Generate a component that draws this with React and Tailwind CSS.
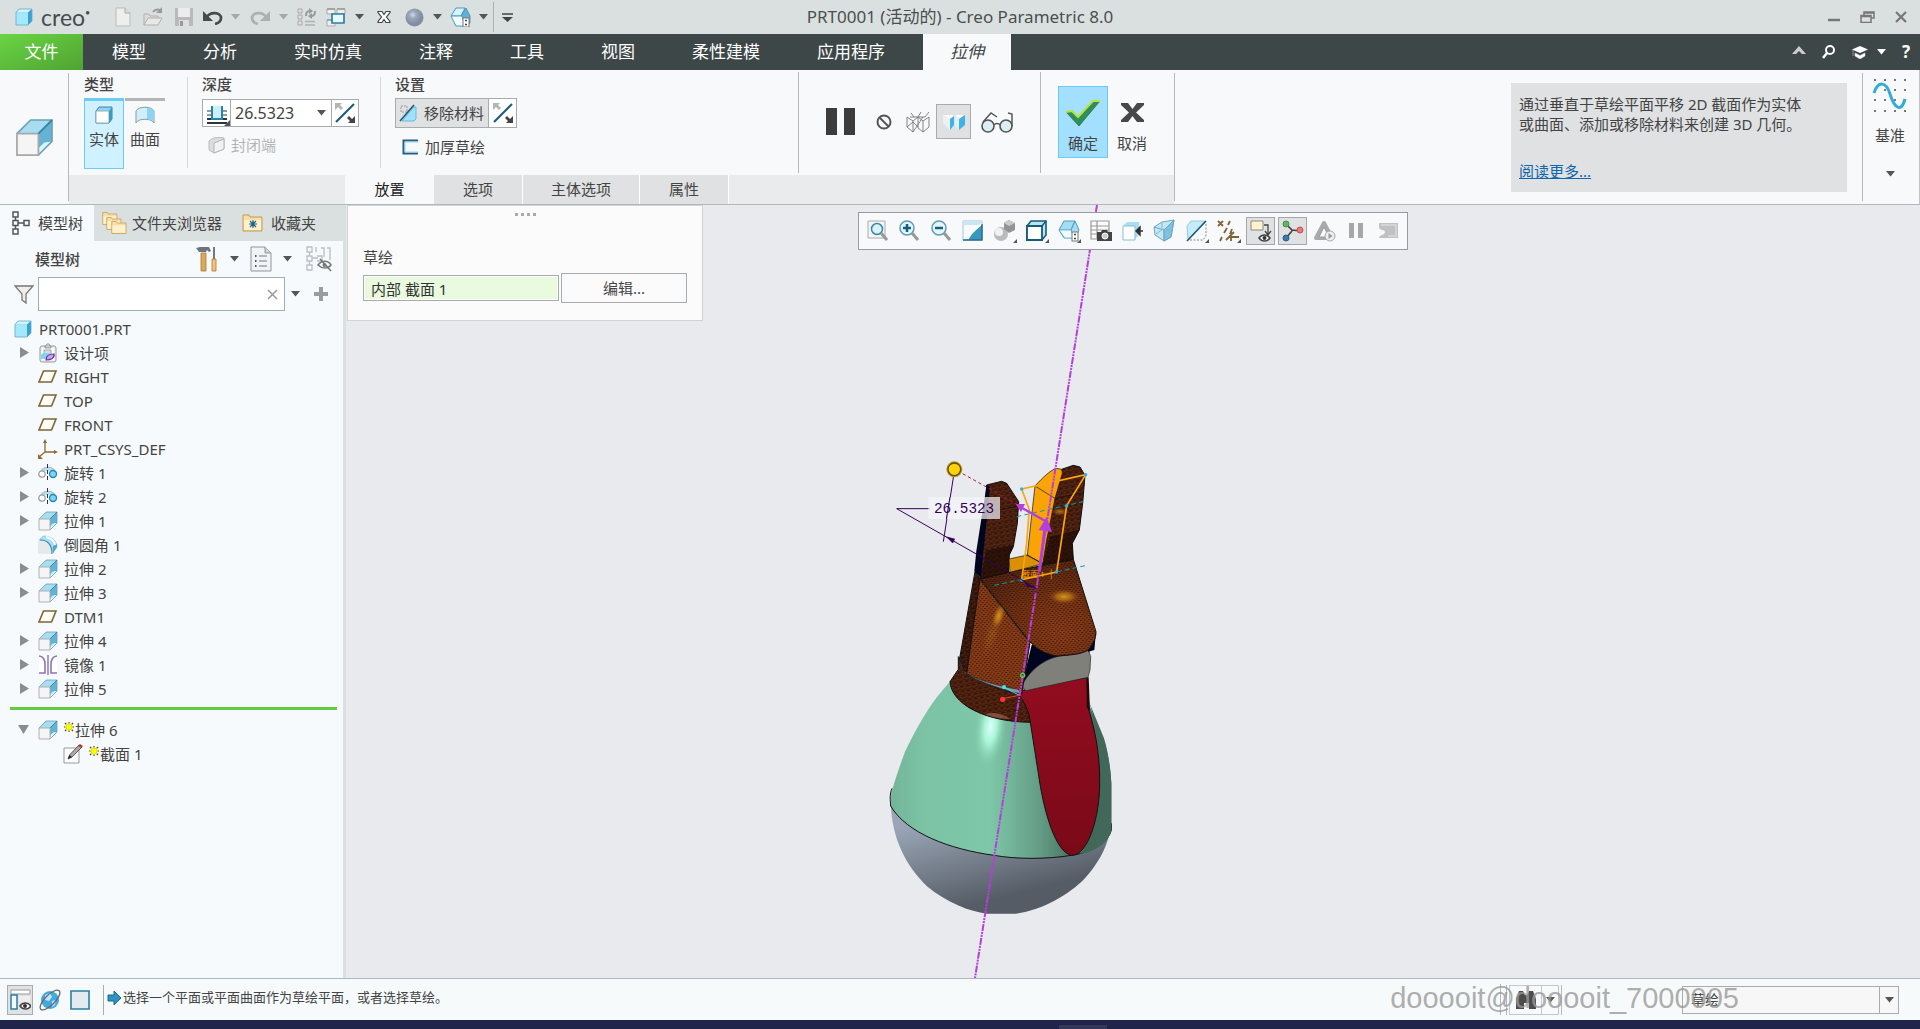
import React from 'react';
import clsx from 'clsx';

const Svg = ({ w = 20, h = 20, box, className, children }) => (
  <svg width={w} height={h} viewBox={box || `0 0 ${w} ${h}`} fill="none" className={clsx('shrink-0', className)} aria-hidden="true">
    {children}
  </svg>
);

const Caret = ({ color = '#555', className }) => (
  <Svg w={9} h={6} className={className}>
    <path d="M0 0h9L4.5 5.5z" fill={color} />
  </Svg>
);

const PartIcon = () => (
  <Svg w={18} h={18}>
    <path d="M1 4.500l3-3.500h13v12l-4 4H1z" fill="#56c5ee" />
    <path d="M1 4.500L4 1h13l-4 3.500z" fill="#d6f4ff" />
    <path d="M1 4.500h12V17H1z" fill="#a3e8ff" />
    <path d="M13 4.500L17 1v12l-4 4z" fill="#3ba2d0" />
    <path d="M1 4.500L4 1h13v12l-4 4H1z" stroke="#5fa9c8" strokeWidth=".8" />
  </Svg>
);

const ExtrudeIcon = ({ size = 20 }) => (
  <Svg w={size} h={size} box="0 0 20 20">
    <path d="M1 8L8 1h11l-7 7z" fill="#a8dcf0" />
    <path d="M12 8l7-7v11l-7 7z" fill="#66b2d3" />
    <path d="M12 19l7-7-4 .5-3 3z" fill="#d5f5ff" />
    <path d="M1 8L8 1h11v11l-7 7" stroke="#6fa0b5" strokeWidth=".8" />
    <path d="M1 8h11v11H1z" fill="#f5f5f5" stroke="#a8a8a8" strokeWidth=".9" />
    <path d="M12 8l7-7" stroke="#3387a9" />
  </Svg>
);

const PlaneIcon = () => (
  <Svg w={20} h={20}>
    <path d="M5.500 4H18l-4.500 11H1z" stroke="#7e6538" strokeWidth="1.600" fill="#fffdf5" />
  </Svg>
);

const CsysIcon = () => (
  <Svg w={20} h={20}>
    <path d="M7 2v11h11M7 13l-6 5" stroke="#8a6a35" strokeWidth="1.300" />
    <path d="M5 4l2-4 2 4zM16 11l4 2-4 2zM0 15v5h5z" fill="#8a6a35" />
  </Svg>
);

const RevolveIcon = () => (
  <Svg w={20} h={20}>
    <path d="M3 8c2-5 12-5 14 0" fill="#b9e0ee" stroke="#8cb9c9" />
    <circle cx="4" cy="11" r="3.200" fill="#fff" stroke="#999" strokeWidth="1.200" />
    <circle cx="15" cy="11" r="3.500" fill="#7fd5fa" stroke="#2487b5" strokeWidth="1.400" />
    <path d="M9.500 1v18" stroke="#333" strokeDasharray="4 2" />
  </Svg>
);

const RoundIcon = () => (
  <Svg w={20} h={20}>
    <path d="M1 5l4-4c8 0 14 4 14 11l-4 6C15 10 10 5 1 5z" fill="#a5e0f7" stroke="#9abccb" strokeWidth=".7" />
    <path d="M15 11l4-2v3l-4 6z" fill="#4fa9cd" />
    <path d="M8 2c5 1 8 4 9 8" stroke="#fff" strokeWidth="2" />
    <path d="M0 5c9 0 14 5 14 14H0z" fill="#e7e8e8" />
    <path d="M2 5c8 0 12 5 12 14" stroke="#3b93b9" strokeWidth="1.200" />
  </Svg>
);

const MirrorIcon = () => (
  <Svg w={20} h={20}>
    <path d="M1 1c4 0 6 4 6 8v9H1M19 1c-4 0-6 4-6 8v9h6" stroke="#9472b8" strokeWidth="1.600" fill="#fff" />
    <path d="M10 0v20" stroke="#777" strokeWidth="1.300" />
  </Svg>
);

const DesignIcon = () => (
  <Svg w={20} h={20}>
    <rect x="2" y="3" width="16" height="16" rx="2" fill="#eee" stroke="#999" />
    <rect x="4" y="5" width="12" height="12" fill="#fff" />
    <path d="M7 5V3h1c0-3 4-3 4 0h1v2z" fill="#ccc" stroke="#888" strokeWidth=".8" />
    <rect x="6" y="7" width="7" height="6" fill="#ddd" stroke="#888" strokeWidth=".7" />
    <path d="M3 12l2-2h7l-2 6H3z" fill="#7fd3f5" />
    <path d="M8 17c0-4 3-6 8-6 1 4-3 6-8 6z" fill="#c9a6e8" stroke="#6c2fa8" strokeWidth="1.200" />
  </Svg>
);

const SketchIcon = () => (
  <Svg w={20} h={20}>
    <path d="M1 4h15v15H1z" fill="#fcfcfc" stroke="#999" />
    <path d="M5 15l1.500-4L16 1l3 2L9 13z" fill="#aaa" stroke="#444" strokeWidth=".8" />
    <path d="M5 15l1.500-4L9 13z" fill="#222" />
    <path d="M15 2l2-2 3 2-2 2z" fill="#c0392b" />
  </Svg>
);

const Spark = () => (
  <Svg w={10} h={10}>
    <path d="M5 0v10M0 5h10M1 1l8 8M9 1L1 9" stroke="#444" strokeWidth="1.200" />
    <path d="M5 1v8M1 5h8M2 2l6 6M8 2L2 8" stroke="#f6ee00" strokeWidth="1.500" />
    <circle cx="5" cy="5" r="2.500" fill="#ff0" />
  </Svg>
);

const FlipIcon = () => (
  <Svg w={22} h={22}>
    <path d="M2 20L20 2" stroke="#1f5c78" strokeWidth="2.200" />
    <path d="M1 1h7L6 3l3 3-2 2-3-3-3 3z" fill="#b5b5b5" />
    <path d="M21 21h-7l2-2-3-3 2-2 3 3 3-3z" fill="#444" />
  </Svg>
);

const FolderShape = ({ x = 0, y = 0, s = 1 }) => (
  <g transform={`translate(${x} ${y}) scale(${s})`}>
    <path d="M1 4V2h6l1 2h12v14H1z" fill="#f8dfa5" stroke="#c19a55" />
    <path d="M2 7h17v10H2z" fill="#fff1cd" />
  </g>
);

const TREE = [
  { name: '设计项', icon: DesignIcon, open: true },
  { name: 'RIGHT', icon: PlaneIcon },
  { name: 'TOP', icon: PlaneIcon },
  { name: 'FRONT', icon: PlaneIcon },
  { name: 'PRT_CSYS_DEF', icon: CsysIcon },
  { name: '旋转 1', icon: RevolveIcon, open: true },
  { name: '旋转 2', icon: RevolveIcon, open: true },
  { name: '拉伸 1', icon: ExtrudeIcon, open: true },
  { name: '倒圆角 1', icon: RoundIcon },
  { name: '拉伸 2', icon: ExtrudeIcon, open: true },
  { name: '拉伸 3', icon: ExtrudeIcon, open: true },
  { name: 'DTM1', icon: PlaneIcon },
  { name: '拉伸 4', icon: ExtrudeIcon, open: true },
  { name: '镜像 1', icon: MirrorIcon, open: true },
  { name: '拉伸 5', icon: ExtrudeIcon, open: true },
];

const MENU = ['模型', '分析', '实时仿真', '注释', '工具', '视图', '柔性建模', '应用程序'];

const ViewBox = () => (
  <Svg w={21} h={20}>
    <path d="M1 9l5-8h10l4 7v9l-5 2H5z" fill="#9fd9f0" />
    <path d="M1 9l5-8h9l-4 8z" fill="#d8f3fd" stroke="#4a9dc0" />
    <path d="M11 9l5-8 4 8v7l-5 3z" fill="#5fb2d6" stroke="#3c8fb4" strokeWidth=".8" />
    <path d="M1 9h11l3 10H6z" fill="#f1fbff" stroke="#4a9dc0" />
    <rect x="13" y="11" width="6" height="9" fill="#fff" stroke="#777" />
    <path d="M15 13.500h2M15 17.500h2" stroke="#444" strokeWidth="1.500" />
  </Svg>
);

const TitleBar = () => (
  <header className="grid h-[34px] shrink-0 grid-cols-[1fr_auto_1fr] items-center bg-[#dae0df]">
    <div className="flex items-center">
      <div className="flex w-[114px] items-center gap-2 pl-[15px]">
        <PartIcon />
        <span className="flex font-['Lato','Noto_Sans',sans-serif] text-[23px] leading-6 text-[#454c4e]">
          creo<span className="text-[9px] leading-4">•</span>
        </span>
      </div>
      <button type="button" aria-label="新建" className="w-[29px]">
        <Svg w={18} h={20}>
          <path d="M2 1h9l5 5v13H2z" fill="#eeeeec" stroke="#bbb" />
          <path d="M11 1v5h5" stroke="#aaa" fill="#ddd" />
        </Svg>
      </button>
      <button type="button" aria-label="打开" className="w-[31px]">
        <Svg w={21} h={20}>
          <path d="M1 18V7h5l1 2h8v3" fill="#ddd" stroke="#b0b0b0" />
          <path d="M1 18l4-7h14l-4 7z" fill="#e8e8e6" stroke="#b0b0b0" />
          <path d="M10 5c2-3 4-3 7-2" stroke="#999" strokeWidth="2" />
          <path d="M19 0v6h-6z" fill="#999" />
        </Svg>
      </button>
      <button type="button" aria-label="保存" className="w-[28px]">
        <Svg w={20} h={20}>
          <path d="M1 1h18v18H1z" fill="#b9b9b9" />
          <path d="M4 1h12v9H4z" fill="#ececec" />
          <path d="M5 13h10v6H5z" fill="#dedede" />
          <path d="M6 14h3v5H6z" fill="#999" />
        </Svg>
      </button>
      <button type="button" aria-label="撤销" className="flex w-[48px] items-center gap-2">
        <Svg w={21} h={16}>
          <path d="M4 9C8 2 19 3 19 9c0 3-2 5-6 6" stroke="#444b4d" strokeWidth="2.700" />
          <path d="M1 2v10h10z" fill="#444b4d" />
        </Svg>
        <Caret color="#a5a8a8" />
      </button>
      <button type="button" aria-label="重做" className="flex w-[47px] items-center gap-2">
        <Svg w={21} h={16}>
          <path d="M17 9C13 2 2 3 2 9c0 3 2 5 6 6" stroke="#acb0b0" strokeWidth="2.700" />
          <path d="M20 2v10H10z" fill="#acb0b0" />
        </Svg>
        <Caret color="#a5a8a8" />
      </button>
      <button type="button" aria-label="重新生成" className="w-[29px]">
        <Svg w={20} h={20}>
          <path d="M1 2h4v4H1zM1 8h4v4H1zM1 14h4v4H1z" stroke="#aaa" />
          <path d="M8 14.500h10M8 18h10" stroke="#b0b0b0" strokeWidth="1.500" />
          <path d="M9 9c0-4 1-5 4-5M18 4c0 4-1 5-4 5" stroke="#999" strokeWidth="2" />
          <path d="M12 1l4 3-4 3zM15 6l-4 3 4 3z" fill="#999" />
        </Svg>
      </button>
      <button type="button" aria-label="窗口" className="flex w-[51px] items-center gap-[9px]">
        <Svg w={20} h={20}>
          <path d="M1 2h8v5H1zM11 2h8v5h-8zM1 13h8v6H1z" fill="#eee" stroke="#aaa" />
          <path d="M1 2h8M11 2h8M1 13h6" stroke="#999" strokeWidth="1.500" />
          <path d="M6 7h12v9H6z" fill="#e9f8ff" stroke="#2b7fa3" strokeWidth="1.700" />
        </Svg>
        <Caret />
      </button>
      <button type="button" aria-label="关闭" className="w-[28px]">
        <Svg w={14} h={14}>
          <path d="M1 1.500h4l2 3 2-3h4v1L9.500 7l3.500 4.500v1H9l-2-3-2 3H1v-1L4.500 7 1 2.500z" fill="#fff" stroke="#444" strokeWidth="1.200" />
        </Svg>
      </button>
      <button type="button" aria-label="外观" className="flex w-[45px] items-center gap-[9px]">
        <Svg w={19} h={19}>
          <defs>
            <radialGradient id="ball" cx=".4" cy=".35">
              <stop offset="0" stopColor="#d3dbe6" />
              <stop offset=".4" stopColor="#9ca8ba" />
              <stop offset="1" stopColor="#818da0" />
            </radialGradient>
          </defs>
          <circle cx="9.500" cy="9.500" r="9" fill="url(#ball)" />
        </Svg>
        <Caret />
      </button>
      <button type="button" aria-label="视图方向" className="flex w-[43px] items-center gap-2">
        <ViewBox />
        <Caret />
      </button>
      <span className="h-[30px] w-px bg-[#a8b0b0]" />
      <button type="button" aria-label="自定义" className="ml-2">
        <Svg w={11} h={9}>
          <path d="M0 1h11" stroke="#444" strokeWidth="1.500" />
          <path d="M0 4h11L5.500 9z" fill="#444" />
        </Svg>
      </button>
    </div>
    <h1 className="text-[17px] leading-6 text-[#4a4f50]">PRT0001 (活动的) - Creo Parametric 8.0</h1>
    <div className="flex items-center justify-end gap-5 pr-[13px]">
      <button type="button" aria-label="最小化">
        <Svg w={12} h={12}><path d="M0 9h12" stroke="#777" strokeWidth="2.500" /></Svg>
      </button>
      <button type="button" aria-label="还原">
        <Svg w={15} h={12}><path d="M4 4V1h10v6h-3M4 2h10M1 4.500h10v7H1zM1 5.500h10" stroke="#777" strokeWidth="1.500" /></Svg>
      </button>
      <button type="button" aria-label="关闭窗口">
        <Svg w={12} h={12}><path d="M1 1l10 10M11 1L1 11" stroke="#777" strokeWidth="2.200" /></Svg>
      </button>
    </div>
  </header>
);

const MenuBar = () => (
  <nav className="flex h-9 shrink-0 items-stretch gap-px bg-[#3d4747] text-[17px] text-white">
    <button type="button" className="w-[83px] bg-linear-to-br from-[#6bd544] to-[#4fa332]">文件</button>
    {MENU.map((item) => (
      <button type="button" key={item} className="px-7">{item}</button>
    ))}
    <button type="button" className="ml-[9px] w-[88px] bg-[#f8f9fb] text-[#3f4647] italic">拉伸</button>
    <div className="mr-[10px] ml-auto flex items-center gap-4">
      <button type="button" aria-label="折叠"><Svg w={14} h={14}><path d="M0 9l7-8 7 8h-4L7 6 4 9z" fill="#ccc" /></Svg></button>
      <button type="button" aria-label="搜索">
        <Svg w={14} h={14}><circle cx="8" cy="5" r="4" stroke="#fff" strokeWidth="2" /><path d="M5 8l-4 5" stroke="#fff" strokeWidth="2.500" /></Svg>
      </button>
      <button type="button" aria-label="学习" className="flex items-center gap-[9px]">
        <Svg w={16} h={14}>
          <path d="M8 1l8 3.500L8 8 0 4.500z" fill="#fff" />
          <path d="M3 8l5 2.500L13 8v3l-5 3-5-3zM1 5v6" fill="#fff" stroke="#ddd" strokeWidth=".5" />
        </Svg>
        <Caret color="#fff" />
      </button>
      <button type="button" aria-label="帮助" className="text-[17px] leading-5 font-bold">?</button>
    </div>
  </nav>
);

const groupTitle = 'text-[15px] leading-5 font-medium text-[#444]';

const Ribbon = () => (
  <section className="flex h-[135px] shrink-0 border-b border-[#b0b8ba] bg-[#f8f9fb] text-[15px] text-[#444]">
    <div className="flex w-[68px] items-center">
      <span className="pl-[15px]"><ExtrudeIcon size={39} /></span>
    </div>
    <div className="my-[3px] w-px bg-[#b5b9bb]" />
    <div className="flex w-[1105px] shrink-0 flex-col">
      <div className="flex h-[105px]">
        <div className="w-[118px] pt-1 pl-[15px]">
          <h2 className={groupTitle}>类型</h2>
          <div className="mt-1 flex gap-px">
            <button type="button" className="flex h-[71px] w-10 flex-col items-center gap-1 border border-t-3 border-[#6ccbf5] bg-[#d0f1ff] pt-1">
              <Svg w={20} h={20}>
                <path d="M2 6l3-4h13v12l-3 4H2z" fill="#8fd3f0" stroke="#3b83a1" />
                <path d="M2 6h13v12H2z" fill="#fff" stroke="#9ab" />
                <path d="M15 6l3-4v12l-3 4z" fill="#3a9cc6" />
              </Svg>
              <span className="leading-5">实体</span>
            </button>
            <button type="button" className="flex h-[71px] w-10 flex-col items-center gap-1 border-t-3 border-[#b5b5b5] pt-1">
              <Svg w={20} h={20}>
                <path d="M1 18V6c2-5 16-5 18 0v12c-2-5-16-5-18 0z" fill="#cfeffb" stroke="#8a9ba2" />
                <path d="M12 3c4 0 6 1 7 3v11c-1-2-4-3-7-3z" fill="#8dd4f0" />
              </Svg>
              <span className="leading-5">曲面</span>
            </button>
          </div>
        </div>
        <div className="my-[7px] w-px bg-[#d5d7da]" />
        <div className="w-[192px] pt-1 pl-[14px]">
          <h2 className={groupTitle}>深度</h2>
          <div className="mt-[5px] flex h-7 w-[157px] border border-[#a9acae] bg-white">
            <button type="button" aria-label="深度选项" className="flex w-7 items-center justify-center border-r border-[#a9acae]">
              <Svg w={26} h={26}>
                <path d="M3 11h5M3 15h5M18 11h5M18 15h5" stroke="#999" strokeWidth="2" />
                <path d="M8 6v13h10V6" stroke="#2584ad" strokeWidth="2" fill="#cdeffc" />
                <path d="M3 19h4M19 19h4M3 23h20" stroke="#333" strokeWidth="2" />
                <path d="M26 20v6h-6z" fill="#555" />
              </Svg>
            </button>
            <input aria-label="深度" defaultValue="26.5323" className="w-[86px] min-w-0 pl-1 text-[16px] text-[#444] outline-none" />
            <button type="button" aria-label="深度值列表" className="w-[14px]"><Caret /></button>
            <button type="button" aria-label="反向" className="flex flex-1 items-center justify-center border-l border-[#a9acae]"><FlipIcon /></button>
          </div>
          <button type="button" disabled className="mt-2 flex items-center gap-[6px] pl-[6px] leading-5 text-[#b3b6b8]">
            <Svg w={17} h={18}>
              <path d="M1 5c4-4 10-4 15-3v11L6 17l-5-3z" fill="#ddd" stroke="#bbb" />
              <path d="M6 7l10-4v10L6 17z" fill="#f2f2f2" stroke="#b5b5b5" />
            </Svg>
            封闭端
          </button>
        </div>
        <div className="my-[7px] w-px bg-[#d5d7da]" />
        <div className="w-[417px] pt-1 pl-[14px]">
          <h2 className={groupTitle}>设置</h2>
          <div className="mt-1 flex h-[30px] w-[122px] border border-[#a9acae]">
            <button type="button" className="flex w-[93px] items-center gap-[6px] border-r border-[#a9acae] bg-[#dfe1e3] pl-[3px]">
              <Svg w={19} h={20}>
                <path d="M2 3h6v6H2z" stroke="#999" strokeDasharray="2 1" />
                <path d="M3 18L15 4h2v12l-2 2z" fill="#9fe2fc" stroke="#5eb0d0" strokeWidth=".8" />
                <path d="M1 18L15 2" stroke="#1f5c78" strokeWidth="1.700" />
              </Svg>
              移除材料
            </button>
            <button type="button" aria-label="切换侧" className="flex flex-1 items-center justify-center bg-white"><FlipIcon /></button>
          </div>
          <button type="button" className="mt-[9px] flex items-center gap-[7px] pl-[7px] leading-5">
            <Svg w={16} h={16}><path d="M16 1.500H1.500v13H16" stroke="#27607b" strokeWidth="2" /><path d="M16 3H3v10h13" stroke="#9ad6ee" /></Svg>
            加厚草绘
          </button>
        </div>
        <div className="my-[2px] w-px bg-[#b5b9bb]" />
        <div className="flex w-[241px] items-center pb-[2px] pl-[27px]">
          <button type="button" aria-label="暂停" className="w-[50px]">
            <Svg w={29} h={27}><path d="M0 0h11v27H0zM18 0h11v27H18z" fill="#3c3c3c" /></Svg>
          </button>
          <button type="button" aria-label="无预览" className="w-[30px]">
            <Svg w={16} h={16}><circle cx="8" cy="8" r="6.500" stroke="#555" strokeWidth="2" /><path d="M3.500 3.500l9 9" stroke="#555" strokeWidth="2" /></Svg>
          </button>
          <button type="button" aria-label="分离" className="w-[30px]">
            <Svg w={24} h={22}>
              <path d="M1 6l6 4 5-4M7 10v11M1 6v10l6 5 10-15M1 16l6-5 5 5M12 6l5 4 6-4M17 10v11M12 6v11l5 4 6-5V6M5 2l3 4M15 1l-3 5M23 1l-4 5H4" stroke="#777" strokeWidth=".9" />
            </Svg>
          </button>
          <button type="button" aria-label="连接" className="flex h-[35px] w-[35px] items-center justify-center border border-[#a9acae] bg-[#dfe1e3]">
            <Svg w={24} h={18}>
              <path d="M1 2h9l2 1-4 3z" fill="#fff" /><path d="M1 2l7 4v11l-7-7z" fill="#eef1f3" />
              <path d="M8 6l4-3v9l-4 5z" fill="#3fb2ea" />
              <path d="M13 2h9l-5 4z" fill="#fff" /><path d="M13 2l4 4v11l-4-4z" fill="#dff0f8" />
              <path d="M17 6l6-4v10l-6 5z" fill="#3fb2ea" />
            </Svg>
          </button>
          <button type="button" aria-label="预览" className="ml-[9px]">
            <Svg w={36} h={22}>
              <circle cx="8" cy="15" r="6" fill="#dcedf5" stroke="#555" strokeWidth="1.600" />
              <circle cx="26" cy="15" r="6" fill="#dcedf5" stroke="#555" strokeWidth="1.600" />
              <path d="M14 14c1-2 5-2 6 0M3 11l8-9 6 4M32 15V3l-4-1" stroke="#555" strokeWidth="1.500" />
            </Svg>
          </button>
        </div>
        <div className="my-[2px] w-px bg-[#b5b9bb]" />
        <div className="flex gap-[9px] pt-4 pl-[17px]">
          <button type="button" className="flex h-[72px] w-[50px] flex-col items-center justify-between border border-[#6ccbf5] bg-[#a3dfff] pt-[13px] pb-1">
            <Svg w={36} h={27}>
              <path d="M1 12l6-1 6 6L28 1h7L14 26z" fill="#2f8f5b" stroke="#1f6b42" strokeWidth=".7" />
              <path d="M1 12l6-1 6 6L28 1h7" stroke="#b9e23a" strokeWidth="2" />
            </Svg>
            <span className="leading-5">确定</span>
          </button>
          <button type="button" className="flex h-[72px] flex-col items-center justify-between pt-4 pb-[5px]">
            <Svg w={25} h={21}>
              <path d="M1 1h7l4.500 6L17 1h7v2l-8 7.500 8 7.500v2h-7l-4.500-6L8 20H1v-2l8-7.500L1 3z" fill="#484848" />
            </Svg>
            <span className="leading-5">取消</span>
          </button>
        </div>
      </div>
      <div className="flex h-[29px] bg-[#e9ebec] pl-[276px]">
        <button type="button" className="w-[89px] bg-[#f8f9fb] text-[#222]">放置</button>
        <button type="button" className="w-[89px] border-r border-white bg-[#dfe1e3]">选项</button>
        <button type="button" className="w-[117px] border-r border-white bg-[#dfe1e3]">主体选项</button>
        <button type="button" className="w-[89px] border-r border-white bg-[#dfe1e3]">属性</button>
      </div>
    </div>
    <div className="my-[3px] w-px bg-[#b5b9bb]" />
    <div className="flex flex-1 items-start justify-end pt-[13px] pr-[15px]">
      <div className="flex h-[109px] w-[336px] flex-col justify-between bg-[#dfe1e3] px-2 pt-[11px] pb-[11px] leading-5">
        <p>
          通过垂直于草绘平面平移 2D 截面作为实体
          <br />
          或曲面、添加或移除材料来创建 3D 几何。
        </p>
        <a href="#more" className="self-start text-[#0f66a8] underline">阅读更多...</a>
      </div>
    </div>
    <div className="my-[3px] w-px bg-[#b5b9bb]" />
    <button type="button" className="flex w-[57px] shrink-0 flex-col items-center border-r border-[#c0c3c5] pt-2 pr-[2px]">
      <Svg w={36} h={36}>
        <path d="M2 2h34M2 12h34M2 22h34M2 33h34" stroke="#777" strokeWidth="2" strokeDasharray="2 8" />
        <path d="M2 15C6 3 14 3 18 16s11 20 15 5" stroke="#35abd9" strokeWidth="3" />
      </Svg>
      <span className="mt-[11px] leading-5">基准</span>
      <Caret className="mt-[26px]" />
    </button>
  </section>
);

const TreeRow = ({ item }) => {
  const Icon = item.icon;
  return (
    <li className="flex h-6 items-center pl-5">
      <span className="w-[18px]">
        {item.open && <Svg w={10} h={12}><path d="M0 0l9 5.500L0 11z" fill="#8a8d8f" /></Svg>}
      </span>
      <Icon />
      <a href="#feature" className="ml-[6px]">{item.name}</a>
    </li>
  );
};

const SidePanel = () => (
  <aside className="flex w-[346px] shrink-0 flex-col border-r-3 border-[#dae0df] bg-[#f7fafc] text-[15px] leading-5 text-[#444]">
    <div className="-mr-[3px] flex h-9 bg-[#dae0df]">
      <button type="button" className="flex w-[94px] items-center gap-2 bg-[#f7fafc] pl-3">
        <Svg w={18} h={24}>
          <path d="M1 1h5v5H1zM1 9.500h5v5H1zM1 18h5v5H1zM12 9.500h5v5h-5zM3.500 6v3M3.500 15v3M6 12h6" stroke="#555" strokeWidth="1.500" />
        </Svg>
        模型树
      </button>
      <button type="button" className="flex w-[140px] items-center gap-1 pl-2">
        <Svg w={26} h={25}>
          <FolderShape s={0.75} /><FolderShape x={4} y={5} s={0.75} /><FolderShape x={9} y={9} s={0.75} />
        </Svg>
        文件夹浏览器
      </button>
      <button type="button" className="flex items-center gap-[7px] pl-2">
        <Svg w={22} h={20}>
          <FolderShape />
          <path d="M11 7v8M7 11h8M8 8l6 6M14 8l-6 6" stroke="#1b6488" strokeWidth="1.200" />
        </Svg>
        收藏夹
      </button>
    </div>
    <div className="flex h-9 items-center pr-[11px] pl-[35px]">
      <h2 className="flex-1 font-medium">模型树</h2>
      <button type="button" aria-label="设置" className="flex items-center gap-3">
        <Svg w={22} h={26}>
          <path d="M0 2l4-1h9l2 4-2 1-2-2-1 2H5L3 6z" fill="#6d7480" />
          <path d="M5 7h5v18H5z" fill="#dba85c" stroke="#a67935" strokeWidth=".8" />
          <path d="M18 1v12" stroke="#777" strokeWidth="2" />
          <path d="M16 13h4v12h-4z" fill="#f0c27a" stroke="#a67935" strokeWidth=".8" />
        </Svg>
        <Caret />
      </button>
      <button type="button" aria-label="显示" className="ml-[11px] flex items-center gap-[11px]">
        <Svg w={22} h={26}>
          <path d="M1 1h14l6 6v18H1z" fill="#f1f4f7" stroke="#8f959c" />
          <path d="M15 1v6h6" stroke="#8f959c" fill="#cfd5db" />
          <path d="M9 10h8M9 15h8M9 20h8" stroke="#777" strokeWidth="1.200" />
          <path d="M5 10h1.500M5 15h1.500M5 20h1.500" stroke="#555" strokeWidth="2" />
        </Svg>
        <Caret />
      </button>
      <button type="button" aria-label="隐藏项" className="ml-[14px]">
        <Svg w={26} h={26}>
          <path d="M1 1h5v5H1zM1 10h5v5H1zM1 19h5v5H1zM3.500 6v4M3.500 15v4M6 12h6M11 10h5v5h-5M10 1v5M15 2h3v9M21 2h3v12" stroke="#bcbfc2" strokeWidth="1.300" />
          <path d="M12 19c4-5 10-5 13 0-3 4-9 4-13 0zM14 13l11 12" stroke="#777" strokeWidth="1.500" />
          <circle cx="18.500" cy="19" r="2" fill="#777" />
        </Svg>
      </button>
    </div>
    <div className="flex h-[34px] items-center pl-[14px]">
      <Svg w={20} h={20}>
        <path d="M1 2h18l-7 8v9l-4-3v-6z" fill="#eee" stroke="#777" strokeWidth="1.300" />
      </Svg>
      <div className="ml-1 flex h-[34px] w-[247px] items-center border border-[#9fb0b3] bg-white">
        <input aria-label="过滤" className="min-w-0 flex-1 px-2 outline-none" />
        <button type="button" aria-label="清除" className="pr-[6px]">
          <Svg w={11} h={11}><path d="M1 1l9 9M10 1l-9 9" stroke="#999" strokeWidth="1.500" /></Svg>
        </button>
      </div>
      <button type="button" aria-label="过滤选项" className="ml-[6px]"><Caret /></button>
      <button type="button" aria-label="添加过滤" className="ml-[14px]">
        <Svg w={14} h={14}><path d="M7 0v14M0 7h14" stroke="#9a9d9f" strokeWidth="4" /></Svg>
      </button>
    </div>
    <ul className="pt-[6px]">
      <li className="flex h-6 items-center gap-[7px] pl-[14px]">
        <PartIcon />
        PRT0001.PRT
      </li>
      {TREE.map((item) => <TreeRow key={item.name} item={item} />)}
    </ul>
    <hr className="mt-[6px] mr-[6px] ml-[10px] h-[3px] border-0 bg-[#63cb40]" />
    <ul className="pt-2">
      <li className="flex h-6 items-center pl-[18px]">
        <Svg w={20} h={12}><path d="M0 1h11L5.500 10z" fill="#8a8d8f" /></Svg>
        <ExtrudeIcon />
        <span className="ml-[6px] self-start pt-1"><Spark /></span>
        <a href="#feature" className="ml-px">拉伸 6</a>
      </li>
      <li className="flex h-6 items-center pl-[63px]">
        <SketchIcon />
        <span className="ml-[6px] self-start pt-1"><Spark /></span>
        <a href="#feature" className="ml-px">截面 1</a>
      </li>
    </ul>
  </aside>
);

const Corner = () => <path d="M24 20v4h-4z" fill="#555" />;

const VIEW_TOOLS = [
  ['重新调整', <><path d="M3 2h17v17H3z" fill="#f2f4f5" stroke="#aaa" /><circle cx="12" cy="10" r="5.500" fill="#d8f1fb" stroke="#3a86a8" strokeWidth="1.500" /><path d="M16 14l6 7" stroke="#999" strokeWidth="3" /></>],
  ['放大', <><circle cx="10" cy="9" r="7" fill="#e6f6fc" stroke="#5d9cb8" strokeWidth="1.500" /><path d="M10 5v8M6 9h8" stroke="#115e86" strokeWidth="2.500" /><path d="M15 14l6 7" stroke="#999" strokeWidth="3" /></>],
  ['缩小', <><circle cx="10" cy="9" r="7" fill="#e6f6fc" stroke="#5d9cb8" strokeWidth="1.500" /><path d="M6 9h8" stroke="#115e86" strokeWidth="2.500" /><path d="M15 14l6 7" stroke="#999" strokeWidth="3" /></>],
  ['重画', <><path d="M2 2h19v19H2z" fill="#f7fbfd" stroke="#aac4cf" /><path d="M2 2h19v4H2z" fill="#c9e6f2" /><path d="M21 6v15H6c3-2 4-5 6-8z" fill="#3a97bd" /><path d="M2 21h19V5" stroke="#286f8e" strokeWidth="1.500" /><path d="M20 5L9 16l-2 4" stroke="#fff" strokeWidth="1.500" /></>],
  ['显示样式', <><circle cx="8" cy="15" r="7" fill="#b9bbbd" /><path d="M11 4l5-3 6 3v7l-6 3-5-4z" fill="#929597" /><path d="M11 4l5-3 6 3-6 3z" fill="#c9cbcd" /><circle cx="6" cy="13" r="4" fill="#f1f1f1" /><Corner /></>],
  ['线框', <><path d="M2 7l4-5h15v14l-4 5H2z" fill="#b6e5f7" stroke="#175a77" strokeWidth="1.600" /><path d="M2 7h15v14H2z" fill="#fff" stroke="#175a77" strokeWidth="1.800" /><path d="M17 7l4-5" stroke="#175a77" strokeWidth="1.500" /><Corner /></>],
  ['已保存方向', <><path d="M2 11l5-9h11l4 9-4 8H7z" fill="#a6dcf2" stroke="#4a9dc0" /><path d="M2 11h12l4-9M14 11l3 8" stroke="#4a9dc0" strokeWidth="1.200" /><path d="M3 11.500h11l2 7H8z" fill="#eefaff" /><rect x="15" y="13" width="6" height="9" fill="#fff" stroke="#777" /><path d="M17 15.500h2M17 19.500h2" stroke="#444" strokeWidth="1.500" /><Corner /></>],
  ['视图管理器', <><path d="M2 2h18v18H2zM2 7h18M2 11h18M2 15h18M8 2v18" stroke="#999" strokeWidth="1.200" fill="#fafafa" /><path d="M8 13h4l1-2h5l1 2h4v9H8z" fill="#444" /><circle cx="16" cy="17" r="3" fill="#ccc" stroke="#fff" /></>],
  ['透视图', <><path d="M2 7l4-4h12v13l-4 4H2z" fill="#a8def4" /><path d="M2 7h12v14H2z" fill="#fff" stroke="#8dbdd0" /><path d="M17 12h5M15 12l4-4v8z" stroke="#333" strokeWidth="1.500" fill="#333" /></>],
  ['剖面', <><path d="M1 8L9 3l12-2-3 17-7 4-9-6z" fill="#c3e6f4" stroke="#6da8c0" /><path d="M1 8l10 3L21 1M11 11v11" stroke="#6da8c0" /><path d="M11 11L21 1l-3 17-7 4z" fill="#7fc1de" stroke="#6da8c0" /><path d="M3 15l7-5 8 1M9 3v7" stroke="#8bb9cb" /></>],
  ['截面', <><path d="M2 7l4-5h14L3 21z" fill="#c6ebf9" stroke="#9cc" /><path d="M5 21h13l3-4V5" stroke="#888" strokeDasharray="2 1.500" /><path d="M21 2L2 22" stroke="#1f5c78" strokeWidth="1.700" /><Corner /></>],
  ['基准显示', <><path d="M1 2l5 5M6 2L1 7M13 2l-2 4M10 9l-3 5M5 18l-2 4M15 10l-2 5M12 18h10M14 12v10M9 21l8-8" stroke="#806438" strokeWidth="1.800" /><Corner /></>],
  ['注释显示', <><path d="M2 2h12v9H2z" fill="#fff3ce" stroke="#888" /><path d="M15 6h4v9M16 12l3 4 3-4" stroke="#444" strokeWidth="1.300" /><path d="M10 19c3-4 8-4 11 0-3 4-8 4-11 0z" fill="#fff" stroke="#444" strokeWidth="1.500" /><circle cx="15.500" cy="19" r="2" fill="#333" /></>, true],
  ['旋转中心', <><path d="M5 5l6 6 9 1M11 12l-6 7" stroke="#444" strokeWidth="1.700" /><circle cx="5" cy="5" r="3" fill="#5fb560" stroke="#4a8a4a" /><circle cx="19" cy="11" r="3" fill="#e77" stroke="#b55" /><circle cx="5" cy="19" r="3" fill="#3a7aa5" stroke="#2b5d80" /></>, true],
  ['仿真', <><path d="M11 4l8 15H3z" stroke="#aaa" strokeWidth="4" strokeLinejoin="round" fill="#aaa" /><path d="M11 8l5 10H6z" fill="#f7f9fb" stroke="#999" /><circle cx="17" cy="17" r="5" fill="#eee" stroke="#aaa" /><path d="M15.500 14l4 3-4 3z" fill="#999" /></>],
  ['暂停仿真', <path d="M4 4h5v15H4zM13 4h5v15h-5z" fill="#a5a7a9" />],
  ['结束仿真', <><path d="M2 4h19v15H2c0-3 6-3 6-6s-6-1-6-5z" fill="#bfc1c3" /><path d="M4 6h15v11h-8" stroke="#dadcde" strokeWidth="1.500" /></>],
];

const ViewToolbar = () => (
  <div className="absolute top-[7px] left-1/2 -ml-[275px] flex h-[38px] w-[550px] items-center border border-[#999c9e] bg-[#f8f9fb] pl-[3px]">
    {VIEW_TOOLS.map(([label, art, pressed]) => (
      <button
        type="button"
        key={label}
        aria-label={label}
        className={clsx('mr-[3px] flex h-7 w-[29px] shrink-0 items-center justify-center border', pressed ? 'border-[#a5a8aa] bg-[#dfe1e3]' : 'border-transparent')}
      >
        <Svg w={24} h={24}>{art}</Svg>
      </button>
    ))}
  </div>
);

const Model = () => (
  <svg className="absolute inset-0 h-full w-full" viewBox="346 205 1574 773" preserveAspectRatio="xMidYMid slice" aria-label="模型">
    <defs>
      <linearGradient id="steel" x1=".1" y1="0" x2=".6" y2="1">
        <stop offset=".15" stopColor="#9aa6b8" />
        <stop offset=".5" stopColor="#78828e" />
        <stop offset=".85" stopColor="#555c66" />
      </linearGradient>
      <linearGradient id="mint">
        <stop offset="0" stopColor="#74b599" />
        <stop offset=".15" stopColor="#7cc3a5" />
        <stop offset=".45" stopColor="#7ec7a8" />
        <stop offset=".68" stopColor="#639b85" />
        <stop offset=".8" stopColor="#4d7966" />
        <stop offset="1" stopColor="#41675a" />
      </linearGradient>
      <radialGradient id="shine">
        <stop offset="0" stopColor="#dbfffc" />
        <stop offset=".4" stopColor="#b5ffe0" stopOpacity=".8" />
        <stop offset="1" stopColor="#80caab" stopOpacity="0" />
      </radialGradient>
      <radialGradient id="gold">
        <stop offset="0" stopColor="#cf971f" />
        <stop offset=".45" stopColor="#b97518" stopOpacity=".75" />
        <stop offset="1" stopColor="#7a3210" stopOpacity="0" />
      </radialGradient>
      <radialGradient id="copper" cx=".7" cy=".75" r=".8">
        <stop offset="0" stopColor="#96401a" />
        <stop offset=".5" stopColor="#7a3413" />
        <stop offset="1" stopColor="#4f2210" />
      </radialGradient>
      <linearGradient id="red" x1="0" y1="0" x2="0" y2="1">
        <stop offset="0" stopColor="#920c1f" />
        <stop offset="1" stopColor="#7a0a18" />
      </linearGradient>
      <pattern id="weave" width="12" height="12" patternUnits="userSpaceOnUse" patternTransform="rotate(-6)">
        <path d="M0 2h7M6 8h6M0 8h1" stroke="#220b03" strokeWidth="4" opacity=".75" />
        <path d="M1 5h6M7 11h5" stroke="#bd5a22" strokeWidth="2" opacity=".45" />
      </pattern>
      <pattern id="grain" width="18" height="14" patternUnits="userSpaceOnUse" patternTransform="rotate(-10)">
        <path d="M0 2h11M9 9h9M2 12h5" stroke="#140602" strokeWidth="3" opacity=".6" />
        <path d="M2 6h9M11 12h6M12 4h4" stroke="#8e441d" strokeWidth="2" opacity=".55" />
      </pattern>
    </defs>

    {/* bulb */}
    <g transform="translate(870 660) scale(.33333)" strokeLinejoin="round">
      <path d="M62 430C66 540 110 620 170 678 230 728 300 755 350 761h88C520 750 600 700 640 660 685 610 705 570 716 530L400 480z" fill="url(#steel)" />
      <path d="M240 65C180 130 150 185 105 275 85 330 68 380 62 410v28C110 520 240 568 372 586 440 598 530 598 605 586 660 578 715 550 724 510V370C722 330 715 280 700 235L655 130 480 60z" fill="url(#mint)" />
      <ellipse cx="362" cy="200" rx="48" ry="125" fill="url(#shine)" transform="rotate(7 362 200)" />
      <path d="M66 385c-8 20-5 35-4 53C110 520 240 568 372 586c68 12 158 12 233 0 55-8 110-36 119-76v-20" stroke="#111" strokeWidth="3" fill="none" />
      <path d="M655 120c25 70 35 150 34 250 0 110-30 190-60 212 45-6 88-34 95-72V370c-2-45-10-95-22-135z" fill="#42685a" />
      <path d="M452 93L650 52l5 93c22 70 35 140 34 225 0 100-34 216-84 216-48-8-84-130-100-246L481 187C475 155 465 130 447 108z" fill="url(#red)" stroke="#111" strokeWidth="3" />
      <path d="M650 52l6 0 4 100-10-10z" fill="#1d0d08" />
      <path d="M265 -10v38L240 65c4 65 100 120 241 122-4-34-18-60-34-82L290 45z" fill="#4b1f0e" />
      <path d="M265 -10v38L240 65c4 65 100 120 241 122-4-34-18-60-34-82L290 45z" fill="url(#grain)" stroke="#111" strokeWidth="3" />
      <path d="M345 163c20-8 50-4 75 14-30 0-60-6-75-14z" fill="#a8705a" opacity=".6" />
    </g>

    {/* fork */}
    <g transform="translate(880 440) scale(.33333)" strokeLinejoin="round">
      <path d="M455 615l180-15-8 40-180 95-20-5z" fill="#00051f" />
      <path d="M425 738c20-40 60-80 115-90 40-4 60-10 85-18l7 20-2 40-6 22-187 40z" fill="#80807a" stroke="#222" strokeWidth="2" />
      <path d="M648 575l-5 55-18 5-7-20z" fill="#00051f" />
      <path d="M285 395l17 23-42 285-22-43z" fill="#35160b" stroke="#111" strokeWidth="3" />
      <path d="M285 395l17 23-42 285-22-43z" fill="url(#grain)" />
      <path d="M300 418l150 190-25 155c-60-10-120-34-165-62z" fill="#913f18" />
      <ellipse cx="335" cy="585" rx="26" ry="80" fill="url(#gold)" opacity=".4" transform="rotate(18 335 585)" />
      <path d="M300 418l150 190-25 155c-60-10-120-34-165-62z" fill="url(#weave)" stroke="#111" strokeWidth="3" />
      <ellipse cx="356" cy="528" rx="20" ry="46" fill="url(#gold)" transform="rotate(18 356 528)" />
      <path d="M238 660c10 40 30 50 75 68 40 15 70 24 110 34l-8-14c-60-10-110-24-160-48z" fill="#8c97a8" stroke="#222" strokeWidth="2" />
      <path d="M300 415l85-18 195-39 68 217c0 20-8 35-23 55-25 15-60 15-95 18-40-8-60-20-85-48z" fill="url(#copper)" />
      <path d="M300 415l85-18 195-39 68 217c0 20-8 35-23 55-25 15-60 15-95 18-40-8-60-20-85-48z" fill="url(#weave)" stroke="#111" strokeWidth="3" />
      <ellipse cx="552" cy="470" rx="50" ry="24" fill="url(#gold)" />
      <path d="M320 135l45-11 15 6 36 55-4 65-12 70-12 25-3 52-83 20z" fill="#4a1f0f" />
      <path d="M320 135l45-11 15 6 36 55-4 65-12 70-12 25-3 52-83 20z" fill="url(#grain)" stroke="#111" strokeWidth="3" />
      <path d="M318 333l82-16-12 28-3 52-83 20z" fill="#170903" opacity=".6" />
      <path d="M320 135l10 6-28 274-19-22 6-60z" fill="#00051f" />
      <path d="M318 333l84-16M330 215l82-16" stroke="#111" strokeWidth="2" />
      <path d="M545 88l35-12 20 5 15 25-7 84-10 80-21 40 3 48-92 16 30-200z" fill="#4a1f0f" />
      <path d="M545 88l35-12 20 5 15 25-7 84-10 80-21 40 3 48-92 16 30-200z" fill="url(#grain)" stroke="#111" strokeWidth="3" />
      <path d="M510 292l88-22-21 40 3 48-92 16z" fill="#170903" opacity=".6" />
      <ellipse cx="540" cy="215" rx="26" ry="12" fill="url(#gold)" opacity=".7" />
      <path d="M527 175l84-17M510 292l88-22" stroke="#111" strokeWidth="2" />
      <path d="M387 357l55-12 48 26-100 26z" fill="#db9006" stroke="#111" strokeWidth="2" />
      <path d="M465 138c25-28 50-50 65-53l15 3 2 12-22 75-25 125-12 72-46-27 16-145z" fill="#f9a307" stroke="#111" strokeWidth="2" />
      <path d="M465 138l60 37M440 345l50 26" stroke="#111" strokeWidth="2" />
      <path d="M410 230l200-45M343 436l277-60" stroke="#0d9a9f" strokeWidth="3" strokeDasharray="14 10" />
      <path d="M425 147l192-43-57 93-30 199-105 23 15-110 8-100z" stroke="#ffa30f" strokeWidth="5" fill="none" />
      <path d="M514 388v30" stroke="#ffa30f" strokeWidth="2" />
      <g fill="#20b8e0">
        <circle cx="425" cy="147" r="5" /><circle cx="617" cy="104" r="5" /><circle cx="560" cy="197" r="5" />
        <circle cx="529" cy="396" r="5" /><circle cx="425" cy="420" r="5" />
      </g>
      <text x="427" y="412" fontSize="24" fill="#ffa30f">截面 1</text>
    </g>

    {/* axis, origin and depth handle */}
    <path d="M1097 205L975 978" stroke="#b63fdb" strokeWidth="2" strokeDasharray="7 1 2 1 2 1" />
    <g transform="translate(880 440) scale(.33333)">
      <path d="M418 766l-46-24" stroke="#3fe8ee" strokeWidth="3" />
      <path d="M418 766l-50 10" stroke="#f33" strokeWidth="3" />
      <circle cx="372" cy="741" r="6" fill="#3fe8ee" /><circle cx="368" cy="778" r="8" fill="#f33" />
      <circle cx="428" cy="706" r="6" stroke="#3fe23f" strokeWidth="4" fill="none" />
      <path d="M500 245l-75-42" stroke="#b63fdb" strokeWidth="7" />
      <path d="M407 192l28 0-12 24z" fill="#b63fdb" />
      <path d="M478 395l18-140" stroke="#b63fdb" strokeWidth="9" />
      <path d="M500 230l-24 40 40 6z" fill="#b63fdb" />
      <path d="M248 101l162 91" stroke="#b01848" strokeWidth="3" strokeDasharray="10 8" />
      <path d="M50 206h100M50 206l418 238v16M222 100l-32 205" stroke="#350058" strokeWidth="3" fill="none" />
      <path d="M200 291l24 6-6 12zM435 428l28 14-20-2z" fill="#350058" stroke="#350058" strokeWidth="2" />
      <rect x="145" y="171" width="215" height="66" fill="#f5f5fa" opacity=".7" />
      <path d="M210 171l-11 66" stroke="#350058" strokeWidth="3" />
      <text x="162" y="220" fontSize="43" fill="#350058" className="font-['Liberation_Mono',monospace]">26.5323</text>
      <circle cx="223" cy="88" r="24" fill="#b59a1d" />
      <circle cx="223" cy="88" r="19" fill="#ffd20a" stroke="#5d5210" strokeWidth="4" />
    </g>
  </svg>
);

const PlacementPanel = () => (
  <div className="absolute top-0 left-px h-[116px] w-[356px] border border-[#cfd3d5] bg-[#fbfbfb] px-[15px] text-[15px] text-[#444]">
    <div className="flex h-[17px] items-center justify-center gap-[3px]">
      <i className="h-[3px] w-[3px] bg-[#aaa]" /><i className="h-[3px] w-[3px] bg-[#aaa]" />
      <i className="h-[3px] w-[3px] bg-[#aaa]" /><i className="h-[3px] w-[3px] bg-[#aaa]" />
    </div>
    <label htmlFor="sketch" className="mt-6 block leading-5">草绘</label>
    <div className="mt-[6px] flex items-center gap-[2px]">
      <input id="sketch" readOnly value="内部 截面 1" className="h-[26px] w-[196px] border border-[#a9acae] bg-[#e9fade] px-[7px] text-[#333] ring-1 ring-white outline-none ring-inset" />
      <button type="button" className="h-[30px] w-[126px] border border-[#a9acae]">编辑...</button>
    </div>
  </div>
);

const StatusBar = () => (
  <footer className="relative flex h-[42px] shrink-0 items-center border-t border-[#a9babc] bg-[#f6fafb] pl-[7px] text-[13px] text-[#444]">
    <button type="button" aria-label="导航器" className="flex h-[30px] w-[26px] items-center justify-center border border-[#a9acae] bg-[#dfe1e3]">
      <Svg w={21} h={22}>
        <path d="M1 1h19v4H1z" fill="#fff" stroke="#999" /><path d="M1 6h6v14H1z" fill="#f0fbff" stroke="#2b7fa3" strokeWidth="1.500" />
        <path d="M9 7h11v6H9z" fill="#eee" />
        <path d="M10 17c3-4 8-4 11 0-3 4-8 4-11 0z" fill="#fff" stroke="#444" strokeWidth="1.500" /><circle cx="15" cy="17" r="2" fill="#333" />
      </Svg>
    </button>
    <button type="button" aria-label="浏览器" className="ml-[6px]">
      <Svg w={22} h={22}>
        <circle cx="11" cy="11" r="9" fill="#46a9dc" /><path d="M6 6l5-2 2 4-3 4-4-1zM13 12l4-1-1 5-3 2z" fill="#bde6f7" />
        <ellipse cx="11" cy="11" rx="13" ry="5" stroke="#667" strokeWidth="1.300" transform="rotate(-45 11 11)" />
      </Svg>
    </button>
    <button type="button" aria-label="全屏" className="ml-[9px]">
      <Svg w={20} h={20}><path d="M1 1h18v18H1z" fill="#e3ebf0" stroke="#2b7fa3" strokeWidth="1.600" /></Svg>
    </button>
    <span className="mr-[3px] ml-[13px] h-[30px] w-px bg-[#a9acae]" />
    <div className="flex items-center gap-px pb-1">
      <Svg w={15} h={16}><path d="M1 5h6V1l7 7-7 7v-4H1z" fill="#2e93bd" stroke="#1d6a8c" /></Svg>
      <p>选择一个平面或平面曲面作为草绘平面，或者选择草绘。</p>
    </div>
    <span className="mr-[5px] ml-auto h-[31px] w-px bg-[#b5b9bb]" />
    <div className="flex h-[30px] items-center border-x border-[#b5b9bb] px-[2px]">
      <button type="button" aria-label="查找" className="flex h-[30px] w-[33px] items-center justify-center border border-[#c5c8ca]">
        <Svg w={20} h={19}><path d="M0 19V9l3-8h4l2 4h2l2-4h4l3 8v10h-7v-6H8v6z" fill="#4b4b4b" /></Svg>
      </button>
      <button type="button" aria-label="查找选项" className="flex h-[30px] w-[17px] items-center justify-center border-y border-r border-[#c5c8ca]"><Caret /></button>
    </div>
    <div className="relative mr-[21px] ml-[120px] h-7 w-[217px]">
      <select aria-label="选择过滤器" className="h-full w-full appearance-none border border-[#a9acae] bg-[#f7f7f7] pl-2 text-[14px]">
        <option>草绘</option>
      </select>
      <span className="pointer-events-none absolute inset-y-0 right-0 flex w-5 items-center justify-center border-l border-[#a9acae]"><Caret /></span>
    </div>
    <span className="pointer-events-none absolute right-[181px] pb-1 font-['Liberation_Sans',sans-serif] text-[29px] leading-8 text-[#999]/80">dooooit@dooooit_7000005</span>
  </footer>
);

export default function App() {
  return (
    <div className="flex h-screen flex-col overflow-hidden font-['Noto_Sans','Noto_Sans_CJK_SC',sans-serif]">
      <TitleBar />
      <MenuBar />
      <Ribbon />
      <div className="flex min-h-0 flex-1">
        <SidePanel />
        <main className="relative flex-1 overflow-hidden bg-[#e8eaee]">
          <Model />
          <PlacementPanel />
          <ViewToolbar />
        </main>
      </div>
      <StatusBar />
      <div className="flex h-[9px] shrink-0 items-end justify-center bg-[#20244a] pl-[246px]">
        <span className="h-1 w-12 bg-[#343858]" />
      </div>
    </div>
  );
}
